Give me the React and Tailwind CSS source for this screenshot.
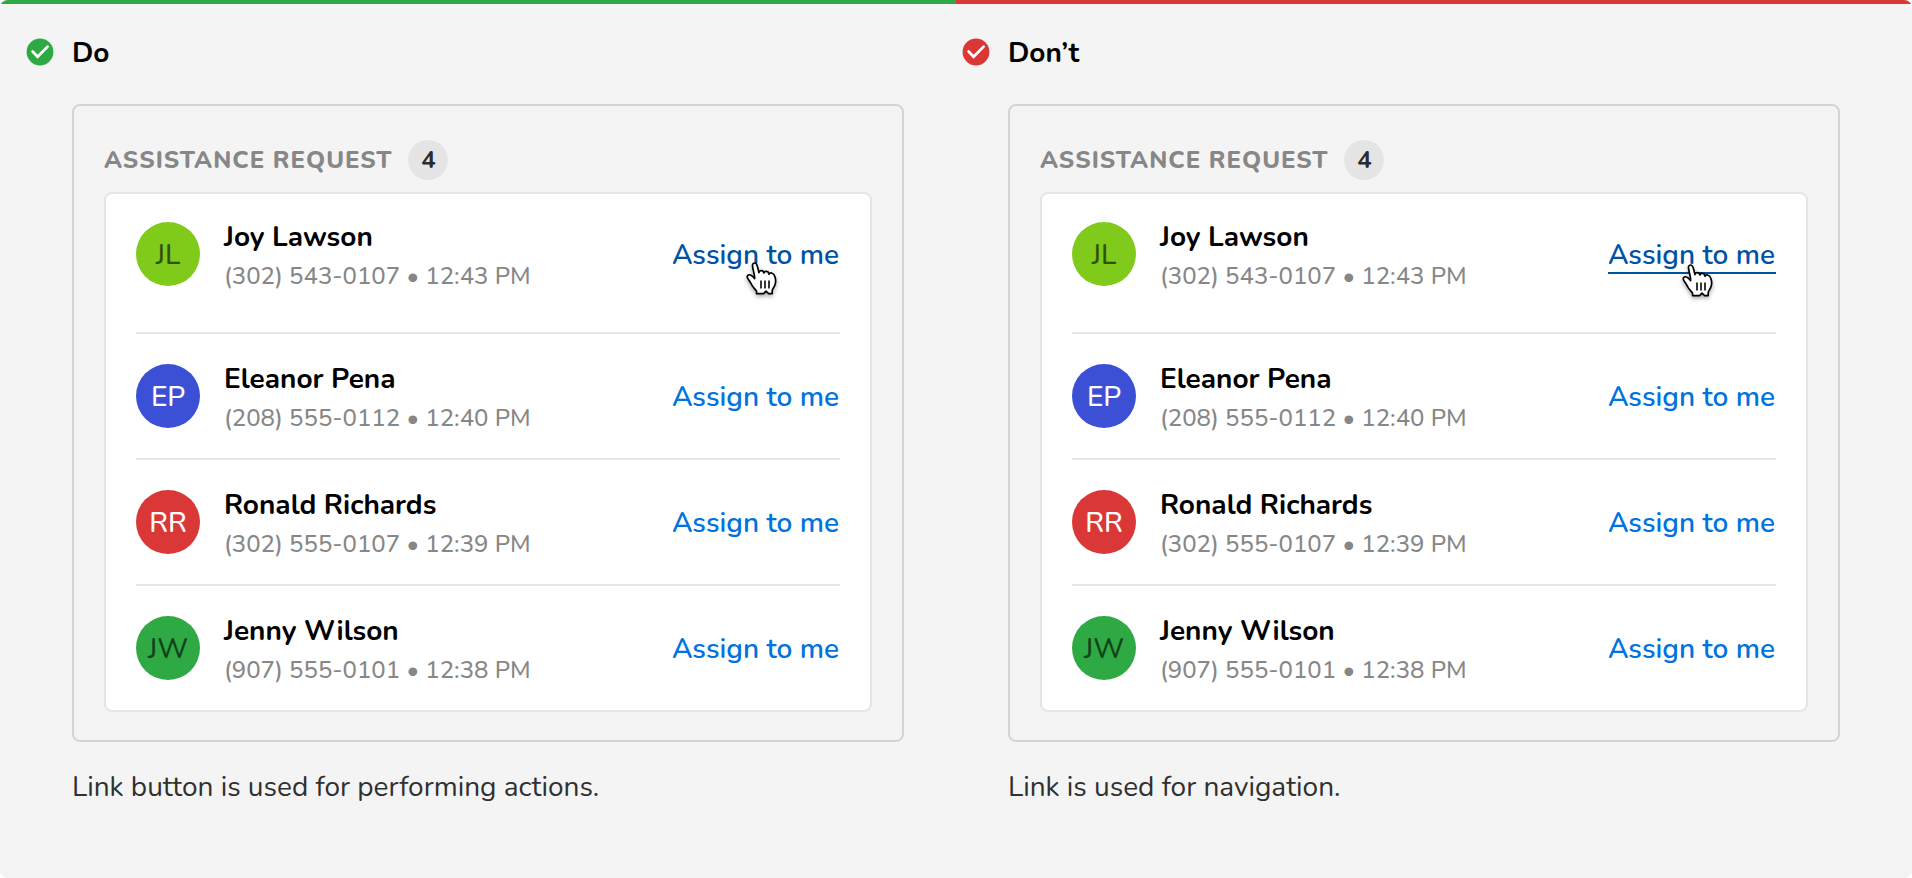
const requests = [
  { initials: "JL", name: "Joy Lawson", phone: "(302) 543-0107", time: "12:43 PM", avatar: "bg-[#80ca1c] text-[#33510b]" },
  { initials: "EP", name: "Eleanor Pena", phone: "(208) 555-0112", time: "12:40 PM", avatar: "bg-[#3c50d6] text-white" },
  { initials: "RR", name: "Ronald Richards", phone: "(302) 555-0107", time: "12:39 PM", avatar: "bg-[#da3737] text-white" },
  { initials: "JW", name: "Jenny Wilson", phone: "(907) 555-0101", time: "12:38 PM", avatar: "bg-[#2fa944] text-[#13431b]" },
];

function CheckBadge({ className }) {
  return (
    <svg viewBox="0 0 32 32" className={`size-8 shrink-0 ${className}`} aria-hidden="true">
      <circle cx="16" cy="16" r="13.4" fill="currentColor" />
      <path d="M8.6 15.5 13.6 20.7 23.6 10.6" fill="none" stroke="#fff" strokeWidth="2.7" strokeLinecap="round" strokeLinejoin="miter" />
    </svg>
  );
}

function HandCursor({ className }) {
  return (
    <svg viewBox="0 0 32 34" className={`pointer-events-none absolute h-[34px] w-8 drop-shadow-[0_2px_2px_rgba(0,0,0,0.35)] ${className}`} aria-hidden="true">
      <path
        d="M10.6 31.6V29.4C9.6 27.4 7.6 25.8 6.2 23.6 5 21.4 4.2 19.8 3 18.2 1.6 16.6 0.9 15.4 1.3 14.2 1.8 12.6 3.6 12.4 5 13.2 6.3 13.9 7.4 15.2 8.6 16.6 8.9 14.8 8.2 12 7.6 9.6 7 7 6.3 4.4 6.5 2.8 6.7 1.4 7.8 0.9 8.8 1 10.2 1.2 10.9 2.5 11.4 4.4 12 6.4 12.5 8.6 12.9 10.6 13.2 9.2 14.2 8.6 15.4 8.7 16.8 8.8 17.7 9.8 17.9 11 18.3 9.8 19.4 9.2 20.6 9.4 22 9.6 22.8 10.6 22.9 12.2 23.6 11.2 24.6 10.8 25.6 11 27.2 11.4 28.4 12.6 28.9 14.4 29.7 17 30 20.2 28.9 23 28.2 25 26.6 26.6 26.2 28.4V31.6H22.6L20 29.2 17.6 31.6Z"
        fill="#fff" stroke="#000" strokeWidth="1.7" strokeLinejoin="round"
      />
      <path d="M15 18.6V26.4M19 18.6V26.4M23 18.6V26.4" stroke="#222" strokeWidth="1.8" />
    </svg>
  );
}

function Action({ underlined, hovered }) {
  const base = "block cursor-pointer border-b-2 pt-1 pr-px text-[28px] leading-[34px] font-semibold";
  const color = hovered ? "text-[#0052a3]" : "text-[#0073e0]";
  if (underlined) {
    return (
      <a href="#assign" className={`${base} ${color} ${hovered ? "border-[#0052a3]" : "border-transparent"}`}>
        Assign to me
      </a>
    );
  }
  return (
    <button type="button" className={`${base} ${color} border-transparent`}>
      Assign to me
    </button>
  );
}

function Example({ title, tone, caption, underlined }) {
  return (
    <section className="grid min-w-0 flex-1 grid-cols-[32px_minmax(0,1fr)] gap-x-4">
      <CheckBadge className={tone} />
      <h2 className="text-[28px] leading-[34px] font-bold text-black">{title}</h2>
      <div className="col-start-2 mt-[34px] rounded-lg border-2 border-[#d4d4d4] px-[30px] pt-[34px] pb-7">
        <div className="mb-3 flex items-center gap-4">
          <h3 className="text-2xl leading-10 font-extrabold tracking-[1px] text-[#878787]">ASSISTANCE REQUEST</h3>
          <span className="flex size-10 items-center justify-center rounded-full bg-[#e5e5e5] text-2xl font-bold text-[#2b2b2b]">4</span>
        </div>
        <ul className="rounded-lg border-2 border-[#e5e5e5] bg-white px-[30px]">
          {requests.map((r, i) => (
            <li key={r.name} className={`flex items-center gap-6 ${i === 0 ? "pt-7 pb-[46px]" : "border-t-2 border-[#e5e5e5] py-[30px]"}`}>
              <span className={`flex size-16 shrink-0 items-center justify-center rounded-full pt-0.5 text-[28px] font-medium ${r.avatar}`}>{r.initials}</span>
              <div className="-my-[9px] min-w-0 flex-1 pt-1">
                <p className="text-[28px] leading-10 font-bold text-black">{r.name}</p>
                <p className="text-2xl leading-[38px] font-medium text-[#878787]">{r.phone} • {r.time}</p>
              </div>
              <div className="relative shrink-0">
                <Action underlined={underlined} hovered={i === 0} />
                {i === 0 && <HandCursor className={underlined ? "top-[30px] left-[74px]" : "top-7 left-[74px]"} />}
              </div>
            </li>
          ))}
        </ul>
      </div>
      <p className="col-start-2 mt-6 text-[28px] leading-[42px] text-[#303030]">{caption}</p>
    </section>
  );
}

export default function App() {
  return (
    <main className="min-h-screen overflow-hidden rounded-lg bg-[#f4f4f4] font-['Nunito','Nunito_Sans','Lato',sans-serif]">
      <div className="grid h-1 grid-cols-2">
        <div className="bg-[#2fa944]" />
        <div className="bg-[#da3737]" />
      </div>
      <div className="flex gap-14 pt-8 pr-[72px] pb-12 pl-6">
        <Example title="Do" tone="text-[#2fa944]" caption="Link button is used for performing actions." />
        <Example title="Don’t" tone="text-[#da3737]" caption="Link is used for navigation." underlined />
      </div>
    </main>
  );
}
